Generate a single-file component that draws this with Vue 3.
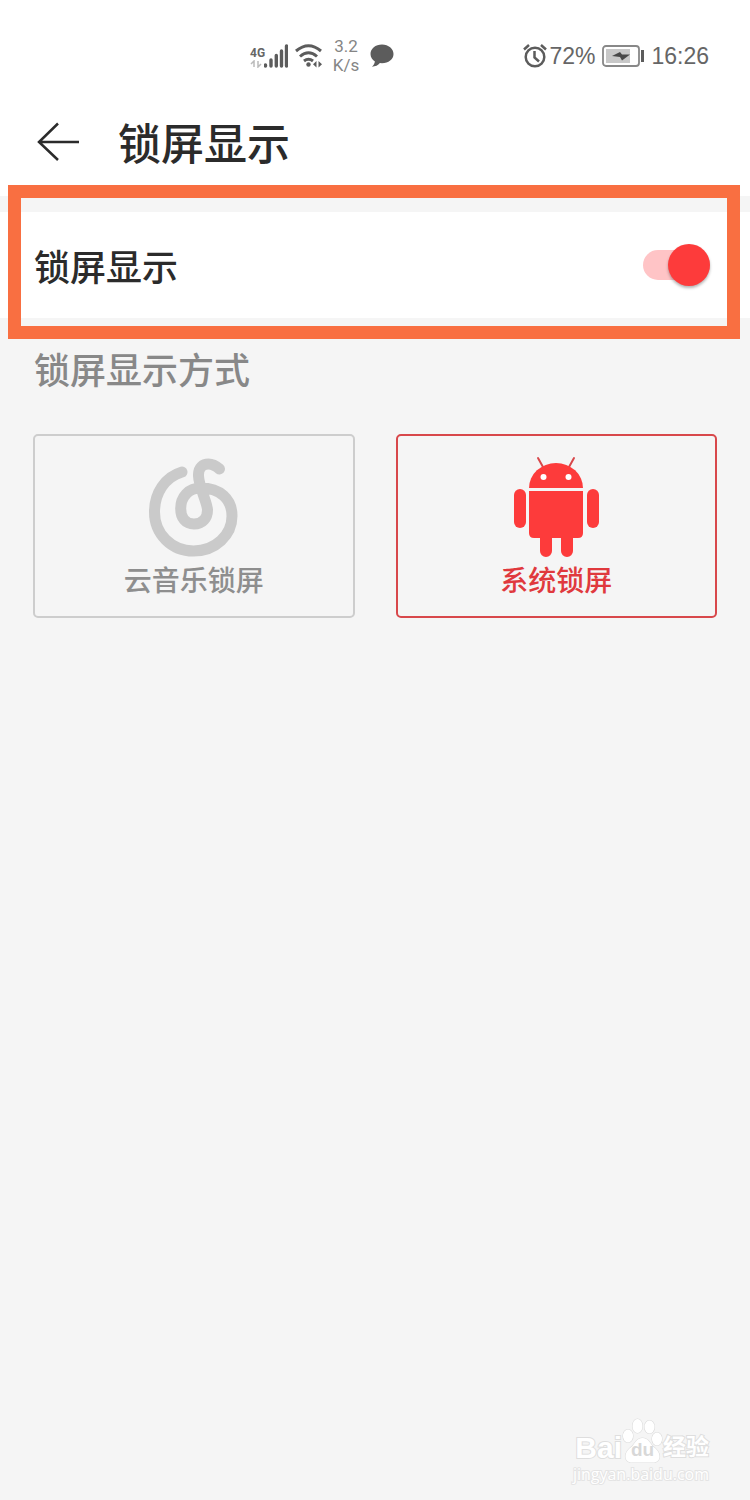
<template>
    <div class="page">
        <!-- status bar -->
        <div class="status-bar">
            <div class="status-left">
                <div class="signal">
                    <div class="network">
                        <span>4G</span>
                        <svg width="12" height="8" viewBox="0 0 12 8">
                            <path d="M4 7V1L1 4M8 1v6l3-3" fill="none" stroke="#bbb" stroke-width="1.5" />
                        </svg>
                    </div>
                    <svg width="24" height="24" viewBox="0 0 24 24">
                        <path d="M1.5 22v-1M7 22v-6M12.300 22V11.500M17.500 22V7M22.500 22V2" stroke="#5c5c5c" stroke-width="3.400" stroke-linecap="round" />
                    </svg>
                </div>
                <svg class="wifi" width="28" height="24" viewBox="0 0 28 24">
                    <g fill="none" stroke="#5c5c5c" stroke-width="3">
                        <path d="M1 7Q13.500-3.500 26 7" />
                        <path d="M5 12.500q8.500-7.500 17 0" />
                        <path d="M9 17q4.500-3.500 9 0" />
                    </g>
                    <circle cx="13.500" cy="20.500" r="2.200" fill="#5c5c5c" />
                    <path d="M21.500 17v6.500L18 20.200zM23.500 17v6.500l3.500-3.300z" fill="#5c5c5c" />
                </svg>
                <div class="speed">
                    <span>3.2</span>
                    <span>K/s</span>
                </div>
                <svg width="24" height="24" viewBox="0 0 24 24">
                    <path d="M12 .5C5.500.5.5 4.700.5 10c0 3.200 1.700 5.700 4.400 7.500-.3 2.200-1.500 3.900-3 5.200 3.500 0 6.200-1.400 8-3.600l2.100.1c6.500 0 11.500-4 11.500-9.200S18.500.5 12 .5z" fill="#5c5c5c" />
                </svg>
            </div>
            <div class="status-right">
                <svg width="24" height="26" viewBox="0 0 24 26">
                    <g fill="none" stroke="#5c5c5c" stroke-width="2.500">
                        <circle cx="12" cy="14" r="9.300" />
                        <path d="M11.500 8v6.500l4.500 4M1 6.500 6 2M18 2l5 4.500" />
                    </g>
                </svg>
                <span class="percent">72%</span>
                <svg class="battery" width="42" height="22" viewBox="0 0 42 22">
                    <rect x="1" y="1" width="36" height="20" rx="3" fill="none" stroke="#888" stroke-width="1.800" />
                    <rect x="4" y="4" width="24" height="14" fill="#c8c8c8" />
                    <path d="m10 11 8-4 2 2.500h8l-8 6-2-3.500z" fill="#484848" />
                    <path d="M40.500 5v12" stroke="#5c5c5c" stroke-width="3" />
                </svg>
                <span>{{ time }}</span>
            </div>
        </div>

        <!-- title -->
        <header class="header">
            <button class="back-btn" type="button" aria-label="返回">
                <svg width="44" height="40" viewBox="0 0 44 40">
                    <path d="M22 1.500 3 20l19 18M3 20h40" fill="none" stroke="#2b2b2b" stroke-width="2.500" />
                </svg>
            </button>
            <h1>锁屏显示</h1>
        </header>

        <!-- main switch -->
        <div class="switch-row">
            <label for="lock-switch">锁屏显示</label>
            <input id="lock-switch" v-model="enabled" class="switch" type="checkbox" role="switch">
            <div class="highlight"></div>
        </div>

        <!-- lock screen type -->
        <fieldset class="modes">
            <legend>锁屏显示方式</legend>
            <div class="cards">
                <label v-for="item in modes" :key="item.value" class="card" :class="{ active: mode === item.value }">
                    <input v-model="mode" type="radio" name="mode" :value="item.value">
                    <svg v-if="item.value === 'music'" width="100" height="104" viewBox="0 0 100 104">
                        <path d="M38 18C21 23 10.500 39 10.500 58c0 22 17 39 39 39s38.500-16 38.500-35c0-17-12-28-31.500-28-12 0-19.800 9-19.800 20.500C36.700 64 41.500 70 50 70s13.500-6 13.500-14c0-7-8.500-23-9-34-.5-9 5-12 10-12 4.500 0 7.500 2 11 5" fill="none" stroke="#cacaca" stroke-width="11" stroke-linecap="round" stroke-linejoin="round" />
                    </svg>
                    <svg v-else width="100" height="104" viewBox="0 0 100 104">
                        <path d="m32 4 5 9M68 4l-5 9" stroke="#d8484b" stroke-width="2" stroke-linecap="round" />
                        <path d="M23 34a27 25 0 0 1 54 0z" fill="#fd3b3b" />
                        <circle cx="37.500" cy="23" r="3" fill="#fff" />
                        <circle cx="62.500" cy="23" r="3" fill="#fff" />
                        <path d="M23 37h54v42q0 5-5 5H28q-5 0-5-5z" fill="#fd3b3b" />
                        <rect x="8" y="35" width="12" height="39" rx="6" fill="#fd3b3b" />
                        <rect x="81" y="35" width="12" height="39" rx="6" fill="#fd3b3b" />
                        <path d="M34 82h12v15a6 6 0 0 1-12 0zM55 82h12v15a6 6 0 0 1-12 0z" fill="#fd3b3b" />
                    </svg>
                    <span class="card-label">{{ item.label }}</span>
                </label>
            </div>
        </fieldset>

        <footer class="brand">
            <div class="brand-logo">
                <span class="bai">Bai</span>
                <span class="paw">
                    <svg width="41" height="46" viewBox="0 0 41 46">
                        <g fill="#fff" stroke="#dcdcdc" stroke-width="1.200">
                            <ellipse cx="6" cy="18" rx="5" ry="6.500" />
                            <ellipse cx="15.500" cy="8" rx="5" ry="7" />
                            <ellipse cx="27.500" cy="9" rx="5" ry="6.500" />
                            <ellipse cx="35" cy="21" rx="5" ry="6.500" />
                            <path d="M20.500 20c-5 0-7 4-10 8-4 3-7 6-7 10.500 0 4 3 6 7 6h20c4 0 7-2 7-6 0-4.500-3-7.500-7-10.500-3-4-5-8-10-8z" />
                        </g>
                    </svg>
                    <span class="du">du</span>
                </span>
                <span class="jingyan">经验</span>
            </div>
            <span class="brand-url">jingyan.baidu.com</span>
        </footer>
    </div>
</template>

<script setup>
import { ref } from "vue";

const time = "16:26";
const enabled = ref(true);
const mode = ref("system");

const modes = [
    { value: "music", label: "云音乐锁屏" },
    { value: "system", label: "系统锁屏" },
];
</script>

<style>
body {
    margin: 0;
    background: #f5f5f5;
}
</style>

<style scoped>
* {
    box-sizing: border-box;
}

.page {
    display: flex;
    flex-direction: column;
    min-height: 100vh;
    background: #f5f5f5;
    font-family: Roboto, "Noto Sans CJK SC", sans-serif;
    color: #2b2b2b;
}

svg {
    display: block;
    flex: none;
}

.status-bar {
    display: flex;
    justify-content: space-between;
    align-items: center;
    height: 112px;
    padding: 0 41px 0 250px;
    background: #fff;
    color: #666;
}

.status-left,
.status-right {
    display: flex;
    align-items: center;
}

.signal {
    display: flex;
    align-items: flex-end;
}

.network {
    display: flex;
    flex-direction: column;
    width: 14px;
    font-size: 12px;
    font-weight: bold;
    line-height: 14px;
}

.wifi {
    margin-left: 7px;
}

.speed {
    display: flex;
    flex-direction: column;
    align-items: center;
    width: 26px;
    margin: 0 11px 0 10px;
    font-size: 17px;
    line-height: 19px;
    color: #858585;
}

.status-right {
    font-family: "Liberation Sans", sans-serif;
    font-size: 23px;
    line-height: 28px;
}

.percent {
    margin: 0 7px 0 2px;
}

.battery {
    margin-right: 7px;
}

.header {
    display: flex;
    align-items: flex-start;
    gap: 38px;
    height: 84px;
    padding: 0 36px;
    background: #fff;
}

.back-btn {
    margin-top: 10px;
    padding: 0;
    border: none;
    background: none;
    cursor: pointer;
}

h1 {
    margin: 0;
    font-size: 43px;
    font-weight: 500;
    line-height: 66px;
}

.switch-row {
    position: relative;
    display: flex;
    justify-content: space-between;
    align-items: center;
    height: 106px;
    margin-top: 16px;
    padding: 0 40px 0 34px;
    background: #fff;
    font-size: 36px;
    font-weight: 500;
}

.switch {
    position: relative;
    width: 67px;
    height: 30px;
    margin: 0;
    border-radius: 15px;
    background: #ddd;
    appearance: none;
    cursor: pointer;
}

.switch::after {
    content: "";
    position: absolute;
    top: -6px;
    left: 0;
    width: 42px;
    height: 42px;
    border-radius: 50%;
    background: #fff;
    box-shadow: 0 2px 3px rgba(0, 0, 0, 0.3);
}

.switch:checked {
    background: #ffc4c6;
}

.switch:checked::after {
    right: 0;
    left: auto;
    background: #fd3b3b;
}

.highlight {
    position: absolute;
    inset: -27px 10px -21px 8px;
    border: 13px solid #f96f41;
    pointer-events: none;
}

.modes {
    min-width: 0;
    margin: 0;
    padding: 0 33px;
    border: none;
}

legend {
    padding: 28px 1px 36px;
    font-size: 36px;
    font-weight: 500;
    line-height: 52px;
    color: #888;
}

.cards {
    display: grid;
    grid-template-columns: 1fr 1fr;
    gap: 41px;
}

.card {
    position: relative;
    display: flex;
    flex-direction: column;
    align-items: center;
    height: 184px;
    padding-top: 18px;
    border: 2px solid #cdcdcd;
    border-radius: 5px;
    cursor: pointer;
}

.card input {
    position: absolute;
    inset: 0;
    margin: 0;
    opacity: 0;
}

.card-label {
    margin-top: 4px;
    font-size: 28px;
    font-weight: 500;
    line-height: 40px;
    color: #8e8e8e;
}

.card.active {
    border-color: #d8484b;
}

.card.active .card-label {
    color: #e0393d;
}

.brand {
    display: flex;
    flex-direction: column;
    align-items: flex-end;
    margin-top: auto;
    padding: 0 41px 16px 0;
    color: #fff;
    -webkit-text-stroke: 2px #dedede;
    paint-order: stroke fill;
}

.brand-logo {
    display: flex;
    align-items: flex-end;
    font-size: 30px;
    font-weight: bold;
    line-height: 32px;
}

.bai {
    font-family: "Liberation Sans", sans-serif;
}

.paw {
    position: relative;
}

.du {
    position: absolute;
    right: 0;
    bottom: 2px;
    left: 0;
    text-align: center;
    font-family: "Liberation Sans", sans-serif;
    font-size: 19px;
    line-height: 24px;
    color: #d8d8d8;
    -webkit-text-stroke: 0;
}

.jingyan {
    font-size: 23px;
}

.brand-url {
    font-family: "Open Sans", sans-serif;
    font-size: 16px;
    line-height: 20px;
    -webkit-text-stroke-color: #e4e4e4;
}
</style>
